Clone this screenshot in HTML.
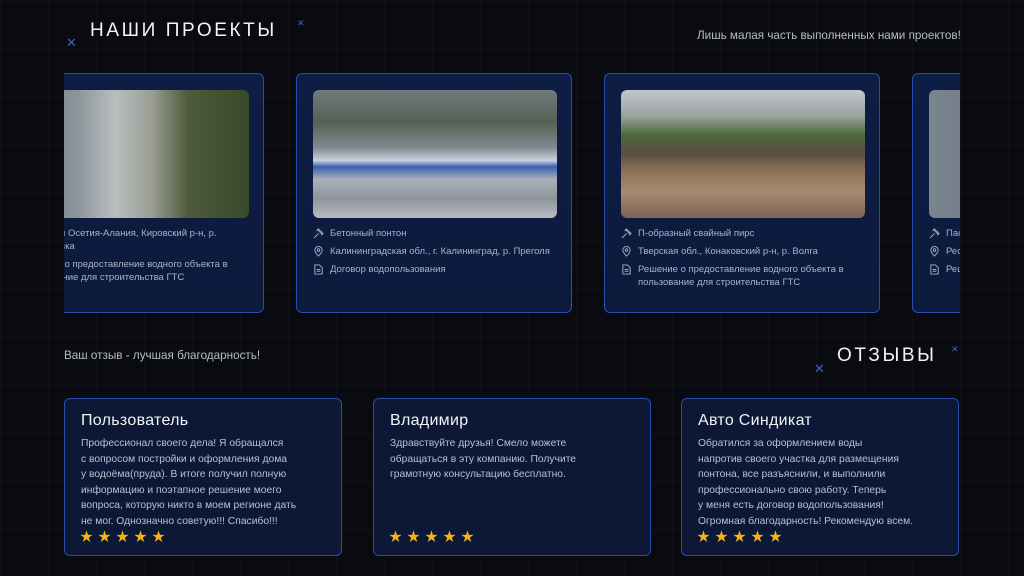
<!DOCTYPE html>
<html><head><meta charset="utf-8"><style>
*{margin:0;padding:0;box-sizing:border-box}
body{width:1024px;height:576px;overflow:hidden;background:#0a0b10;font-family:"Liberation Sans","Noto Sans CJK SC",sans-serif;color:#c9cfdc;position:relative;
background-image:linear-gradient(rgba(255,255,255,0.025) 1px,transparent 1px),linear-gradient(90deg,rgba(255,255,255,0.025) 1px,transparent 1px);background-size:48px 48px}
.abs{position:absolute}
.h{font-size:19px;letter-spacing:2.6px;color:#f2f4f8;font-weight:400}
.x{color:#3b5fd0;font-size:13px;line-height:1}
.sub{font-size:11.7px;color:#b8bdc8}
.clip{position:absolute;left:64px;top:72px;width:896px;height:244px;overflow:hidden}
.card{position:absolute;top:1px;width:276px;height:240px;border:1.5px solid #2a4cb0;border-radius:6px;background:linear-gradient(180deg,#0e1d45,#0c1a3c)}
.img{position:absolute;left:16px;top:16px;width:244px;height:128px;border-radius:6px}
.rows{position:absolute;left:16px;top:153px;right:10px;font-size:9.5px;color:#aab3c6;line-height:13px}
.r{display:flex;gap:6px;margin-bottom:5px}
.ic{width:11px;height:11px;flex:none;margin-top:1px}
.rv{position:absolute;top:398px;width:278px;height:158px;border:1.5px solid #2a4cb0;border-radius:6px;background:#0d1836;padding:13px 16px}
.rv h3{font-weight:400;font-size:16px;color:#f2f4f8;margin-bottom:6px;letter-spacing:.3px}
.rv p{font-size:10.3px;line-height:15.6px;color:#b9c0cf}
.st{position:absolute;left:15px;bottom:10px;color:#f5b316;font-size:13px;letter-spacing:5px}
</style></head><body>
<div class="abs x" style="left:66px;top:36px">✕</div>
<div class="abs h" style="left:90px;top:20px">НАШИ ПРОЕКТЫ</div>
<div class="abs x" style="left:297px;top:19px;font-size:9px">✕</div>
<div class="abs sub" style="left:697px;top:29px">Лишь малая часть выполненных нами проектов!</div>

<div class="clip">
 <div class="card" style="left:-76px">
  <div class="img" style="background:linear-gradient(90deg,#6d7a84 0%,#8c959b 30%,#b9bec0 45%,#9a9e95 60%,#4d5b3a 75%,#3a4a2a 100%)"></div>
  <div class="rows"><div class="r"><span class="ic"></span>Северная Осетия-Алания, Кировский р-н, р. Дарьяловка</div><div class="r"><span class="ic"></span>Решение о предоставление водного объекта в пользование для строительства ГТС</div></div>
 </div>
 <div class="card" style="left:232px">
  <div class="img" style="background:linear-gradient(180deg,#6f7b7a 0%,#566055 25%,#7f8a90 45%,#c9d2e0 55%,#3d5fb0 60%,#a9b1bb 70%,#8d949a 85%,#b7bcc2 100%)"></div>
  <div class="rows">
   <div class="r"><svg class="ic" viewBox="0 0 12 12" fill="none" stroke="#aab3c6" stroke-width="1"><path d="M1 11l5-5M5 2l5 5M4 3l2-2 5 5-2 2"/></svg>Бетонный понтон</div>
   <div class="r"><svg class="ic" viewBox="0 0 12 12" fill="none" stroke="#aab3c6" stroke-width="1"><path d="M6 11C3 8 2 6 2 4.5a4 4 0 018 0C10 6 9 8 6 11z"/><circle cx="6" cy="4.5" r="1.4"/></svg>Калининградская обл., г. Калининград, р. Преголя</div>
   <div class="r"><svg class="ic" viewBox="0 0 12 12" fill="none" stroke="#aab3c6" stroke-width="1"><path d="M2 1h5l3 3v7H2z M4 6h4M4 8h4"/></svg>Договор водопользования</div>
  </div>
 </div>
 <div class="card" style="left:540px">
  <div class="img" style="background:linear-gradient(180deg,#c2c6cc 0%,#9aa5a0 20%,#4e6a3c 35%,#5b4d40 50%,#8a6f58 62%,#a88a70 80%,#7b6552 100%)"></div>
  <div class="rows">
   <div class="r"><svg class="ic" viewBox="0 0 12 12" fill="none" stroke="#aab3c6" stroke-width="1"><path d="M1 11l5-5M5 2l5 5M4 3l2-2 5 5-2 2"/></svg>П-образный свайный пирс</div>
   <div class="r"><svg class="ic" viewBox="0 0 12 12" fill="none" stroke="#aab3c6" stroke-width="1"><path d="M6 11C3 8 2 6 2 4.5a4 4 0 018 0C10 6 9 8 6 11z"/><circle cx="6" cy="4.5" r="1.4"/></svg>Тверская обл., Конаковский р-н, р. Волга</div>
   <div class="r"><svg class="ic" viewBox="0 0 12 12" fill="none" stroke="#aab3c6" stroke-width="1"><path d="M2 1h5l3 3v7H2z M4 6h4M4 8h4"/></svg>Решение о предоставление водного объекта в пользование для строительства ГТС</div>
  </div>
 </div>
 <div class="card" style="left:848px">
  <div class="img" style="background:linear-gradient(90deg,#7a8590,#4c5560)"></div>
  <div class="rows">
   <div class="r"><svg class="ic" viewBox="0 0 12 12" fill="none" stroke="#aab3c6" stroke-width="1"><path d="M1 11l5-5M5 2l5 5M4 3l2-2 5 5-2 2"/></svg>Пас</div>
   <div class="r"><svg class="ic" viewBox="0 0 12 12" fill="none" stroke="#aab3c6" stroke-width="1"><path d="M6 11C3 8 2 6 2 4.5a4 4 0 018 0C10 6 9 8 6 11z"/><circle cx="6" cy="4.5" r="1.4"/></svg>Рес</div>
   <div class="r"><svg class="ic" viewBox="0 0 12 12" fill="none" stroke="#aab3c6" stroke-width="1"><path d="M2 1h5l3 3v7H2z M4 6h4M4 8h4"/></svg>Реш пол</div>
  </div>
 </div>
</div>

<div class="abs sub" style="left:64px;top:349px">Ваш отзыв - лучшая благодарность!</div>
<div class="abs x" style="left:814px;top:362px">✕</div>
<div class="abs h" style="left:837px;top:345px">ОТЗЫВЫ</div>
<div class="abs x" style="left:951px;top:345px;font-size:9px">✕</div>

<div class="rv" style="left:64px"><h3>Пользователь</h3><p>Профессионал своего дела! Я обращался<br>с вопросом постройки и оформления дома<br>у водоёма(пруда). В итоге получил полную<br>информацию и поэтапное решение моего<br>вопроса, которую никто в моем регионе дать<br>не мог. Однозначно советую!!! Спасибо!!!</p><div class="st">★★★★★</div></div>
<div class="rv" style="left:373px"><h3>Владимир</h3><p>Здравствуйте друзья! Смело можете<br>обращаться в эту компанию. Получите<br>грамотную консультацию бесплатно.</p><div class="st">★★★★★</div></div>
<div class="rv" style="left:681px"><h3>Авто Синдикат</h3><p>Обратился за оформлением воды<br>напротив своего участка для размещения<br>понтона, все разъяснили, и выполнили<br>профессионально свою работу. Теперь<br>у меня есть договор водопользования!<br>Огромная благодарность! Рекомендую всем.</p><div class="st">★★★★★</div></div>
</body></html>
